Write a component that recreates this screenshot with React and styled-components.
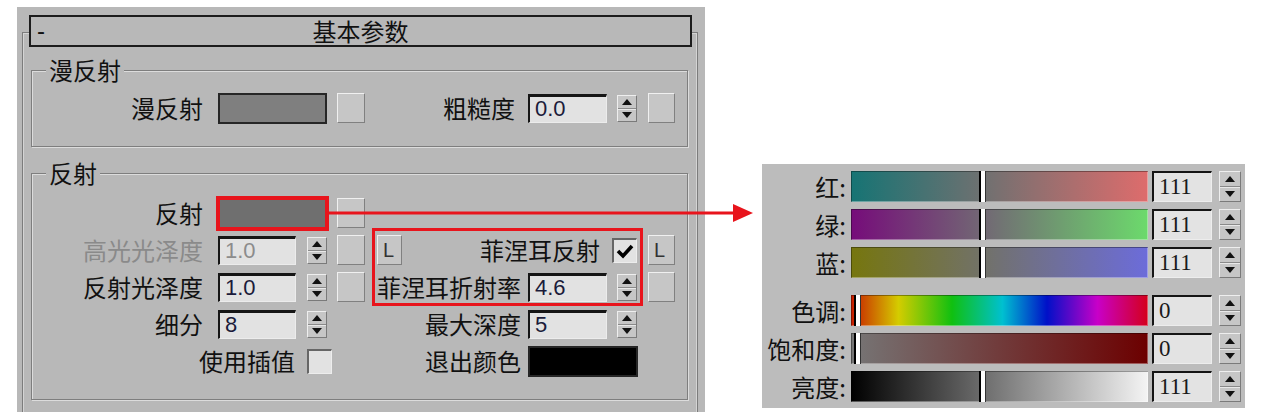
import React from "react";
import styled, { createGlobalStyle } from "styled-components";

const GlobalStyle = createGlobalStyle`
  html, body {
    margin: 0;
    padding: 0;
    background: #ffffff;
  }
  body {
    font-family: "Noto Sans CJK SC", "Noto Sans", sans-serif;
    color: #111;
  }
`;

const Page = styled.div`
  position: relative;
  display: flex;
  align-items: flex-start;
  width: 1267px;
  height: 412px;
  overflow: hidden;
`;

/* ---------- left: material parameter rollout ---------- */

const ParamPanel = styled.div`
  margin: 7px 0 0 17px;
  width: 688px;
  height: 405px;
  background: #b8b8b8;
  overflow: hidden;
`;

const Rollout = styled.div`
  margin: 25px 7px 0 5px;
  height: 400px;
  border: 1px solid #7c7c7c;
  border-bottom: none;
  box-shadow: inset 1px 1px 0 #d4d4d4, inset -1px 0 0 #d4d4d4;
`;

const TitleBar = styled.div`
  display: flex;
  align-items: center;
  box-sizing: border-box;
  height: 32px;
  margin: -18px 5px 0 6px;
  padding: 0 6px;
  border: 2px solid #1c1c1c;
  background: #b8b8b8;
  font-size: 24px;
  line-height: 1;
`;

const Collapse = styled.span`
  width: 14px;
  font-family: "Liberation Sans", sans-serif;
`;

const TitleText = styled.span`
  flex: 1;
  text-align: center;
  padding-right: 14px;
`;

const Group = styled.fieldset`
  margin: ${(p) => p.$top}px 9px 0 8px;
  padding: ${(p) => p.$padTop}px 0 23px;
  min-width: 0;
  border: 1px solid #7e7e7e;
  box-shadow: inset 1px 1px 0 #dcdcdc, 1px 1px 0 #dcdcdc;
`;

const GroupTitle = styled.legend`
  margin-left: 14px;
  padding: 0 3px;
  font-size: 24px;
  line-height: 24px;
  background: #b8b8b8;
`;

const ParamGrid = styled.div`
  position: relative;
  display: grid;
  grid-template-columns: 186px 89px 30px 40px 25px 126px 89px 31px 27px;
  grid-auto-rows: 30px;
  row-gap: 7px;
  align-items: center;
`;

const Label = styled.span`
  grid-column: ${(p) => p.$col};
  justify-self: end;
  padding-right: ${(p) => p.$pad}px;
  white-space: nowrap;
  font-size: 24px;
  line-height: 1;
  color: ${(p) => (p.$dim ? "#8a8a8a" : "#111")};
`;

const Swatch = styled.div`
  grid-column: ${(p) => p.$col};
  box-sizing: border-box;
  width: ${(p) => p.$w}px;
  height: 31px;
  background: ${(p) => p.$color};
  border: 2px solid ${(p) => (p.$mark ? "#e8141c" : "#262626")};
  box-shadow: ${(p) => (p.$mark ? "0 0 0 2px #e8141c" : "none")};
`;

const NumField = styled.div`
  grid-column: ${(p) => p.$col};
  box-sizing: border-box;
  width: ${(p) => p.$w}px;
  height: 29px;
  padding-left: 5px;
  display: flex;
  align-items: center;
  background: #e2e2e2;
  border-style: solid;
  border-width: 3px 1px 1px 2px;
  border-color: #151515 #ececec #ececec #151515;
  font-family: "Liberation Sans", sans-serif;
  font-size: 22px;
  color: ${(p) => (p.$dim ? "#8c8c8c" : "#1b1b3a")};
`;

const SpinBox = styled.div`
  grid-column: ${(p) => p.$col || "auto"};
  box-sizing: border-box;
  width: ${(p) => p.$w}px;
  height: ${(p) => p.$h}px;
  display: flex;
  flex-direction: column;
  background: #c6c6c6;
  border: 1px solid;
  border-color: #eeeeee #7a7a7a #7a7a7a #eeeeee;
`;

const SpinHalf = styled.div`
  flex: 1;
  display: flex;
  align-items: center;
  justify-content: center;
  & + & {
    border-top: 1px solid #8a8a8a;
    box-shadow: inset 0 1px 0 #e8e8e8;
  }
`;

const Arrow = styled.span`
  width: 0;
  height: 0;
  border-left: 5px solid transparent;
  border-right: 5px solid transparent;
  ${(p) => (p.$down ? "border-top: 6px solid #111;" : "border-bottom: 6px solid #111;")}
`;

const MapButton = styled.div`
  grid-column: ${(p) => p.$col};
  box-sizing: border-box;
  width: ${(p) => p.$w || 28}px;
  height: 30px;
  padding-left: 5px;
  display: flex;
  align-items: center;
  background: #c6c6c6;
  border: 1px solid;
  border-color: #f0f0f0 #808080 #808080 #f0f0f0;
  font-family: "Liberation Sans", sans-serif;
  font-size: 20px;
  color: #333;
`;

const CheckBox = styled.div`
  grid-column: ${(p) => p.$col};
  margin-left: ${(p) => p.$shift || 0}px;
  box-sizing: border-box;
  width: 25px;
  height: 25px;
  display: flex;
  align-items: center;
  justify-content: center;
  background: #e2e2e2;
  border-style: solid;
  border-width: 2px 1px 1px 2px;
  border-color: #666666 #ededed #ededed #666666;
`;

const Highlight = styled.div`
  position: absolute;
  left: 340px;
  top: 30px;
  width: 271px;
  height: 78px;
  box-sizing: border-box;
  border: 3px solid #e8141c;
  pointer-events: none;
`;

const Pointer = styled.svg`
  position: absolute;
  left: 327px;
  top: 202px;
`;

function Spinner({ col, w = 20, h = 27 }) {
  return (
    <SpinBox $col={col} $w={w} $h={h}>
      <SpinHalf>
        <Arrow />
      </SpinHalf>
      <SpinHalf>
        <Arrow $down />
      </SpinHalf>
    </SpinBox>
  );
}

function Tick() {
  return (
    <svg width="18" height="16" viewBox="0 0 18 16">
      <path d="M2 8 L7 13 L16 3" fill="none" stroke="#000" strokeWidth="3.6" />
    </svg>
  );
}

/* ---------- right: colour picker sliders ---------- */

const PickerPanel = styled.div`
  margin: 164px 0 0 57px;
  box-sizing: border-box;
  width: 483px;
  height: 244px;
  padding: 7px 4px 0 0;
  display: flex;
  flex-direction: column;
  gap: 17px;
  background: #bcbcbc;
`;

const SliderGroup = styled.div`
  display: grid;
  grid-template-columns: 89px 301px 67px 22px;
  grid-auto-rows: 31px;
  row-gap: 7px;
  align-items: center;
`;

const SliderLabel = styled.span`
  justify-self: end;
  padding-right: 5px;
  white-space: nowrap;
  font-size: 24px;
  line-height: 1;
`;

const Bar = styled.div`
  position: relative;
  width: 297px;
  height: 31px;
  background: ${(p) => p.$fill};
  box-shadow: inset 1px 1px 0 rgba(0, 0, 0, 0.35), inset -1px -1px 0 rgba(255, 255, 255, 0.35);
`;

const Thumb = styled.div`
  position: absolute;
  top: 0;
  bottom: 0;
  width: 4px;
  background: #ffffff;
  border-left: 2px solid #000;
  border-right: 1px solid #333;
`;

const ValueField = styled.div`
  box-sizing: border-box;
  width: 60px;
  height: 31px;
  padding-left: 5px;
  display: flex;
  align-items: center;
  background: #e3e3e3;
  border-style: solid;
  border-width: 2px 1px 1px 2px;
  border-color: #151515 #ededed #ededed #151515;
  font-family: "Liberation Serif", serif;
  font-size: 23px;
  color: #1a1a1a;
`;

const rgbSliders = [
  { label: "红:", value: 111, fill: "linear-gradient(to right, rgb(22,116,116), rgb(222,108,108))" },
  { label: "绿:", value: 111, fill: "linear-gradient(to right, rgb(118,12,122), rgb(108,218,108))" },
  { label: "蓝:", value: 111, fill: "linear-gradient(to right, rgb(118,118,14), rgb(108,108,218))" },
];

const hsvSliders = [
  {
    label: "色调:",
    value: 0,
    fill: "linear-gradient(to right, #c81a00, #d4cc00 16%, #10c010 34%, #00c0d0 51%, #0010c8 66%, #c800c8 83%, #d4001a)",
  },
  { label: "饱和度:", value: 0, fill: "linear-gradient(to right, rgb(118,118,118), rgb(108,0,0))" },
  { label: "亮度:", value: 111, fill: "linear-gradient(to right, #000000, #f4f4f4)" },
];

function SliderRow({ label, value, fill }) {
  const left = 3 + Math.round((value / 255) * 287);
  return (
    <>
      <SliderLabel>{label}</SliderLabel>
      <Bar $fill={fill}>
        <Thumb style={{ left }} />
      </Bar>
      <ValueField>{value}</ValueField>
      <Spinner w={22} h={31} />
    </>
  );
}

export default function App() {
  return (
    <Page>
      <GlobalStyle />
      <ParamPanel>
        <Rollout>
          <TitleBar>
            <Collapse>-</Collapse>
            <TitleText>基本参数</TitleText>
          </TitleBar>

          <Group $top={11} $padTop={11}>
            <GroupTitle>漫反射</GroupTitle>
            <ParamGrid>
              <Label $col="1" $pad={15}>漫反射</Label>
              <Swatch $col="2 / 4" $w={109} $color="#7f7f7f" />
              <MapButton $col="4" />
              <Label $col="5 / 7" $pad={13}>粗糙度</Label>
              <NumField $col="7" $w={79}>0.0</NumField>
              <Spinner col="8" />
              <MapButton $col="9" $w={27} />
            </ParamGrid>
          </Group>

          <Group $top={14} $padTop={13}>
            <GroupTitle>反射</GroupTitle>
            <ParamGrid>
              <Label $col="1" $pad={15}>反射</Label>
              <Swatch $col="2 / 4" $w={109} $color="#6f6f6f" $mark />
              <MapButton $col="4" />

              <Label $col="1" $pad={15} $dim>高光光泽度</Label>
              <NumField $col="2" $w={78} $dim>1.0</NumField>
              <Spinner col="3" />
              <MapButton $col="4" />
              <MapButton $col="5" $w={25}>L</MapButton>
              <Label $col="6 / 8" $pad={17}>菲涅耳反射</Label>
              <CheckBox $col="8" $shift={-5}>
                <Tick />
              </CheckBox>
              <MapButton $col="9" $w={27}>L</MapButton>

              <Label $col="1" $pad={15}>反射光泽度</Label>
              <NumField $col="2" $w={78}>1.0</NumField>
              <Spinner col="3" />
              <MapButton $col="4" />
              <Label $col="5 / 7" $pad={7}>菲涅耳折射率</Label>
              <NumField $col="7" $w={79}>4.6</NumField>
              <Spinner col="8" />
              <MapButton $col="9" $w={27} />

              <Label $col="1" $pad={15}>细分</Label>
              <NumField $col="2" $w={78}>8</NumField>
              <Spinner col="3" />
              <Label $col="5 / 7" $pad={7}>最大深度</Label>
              <NumField $col="7" $w={79}>5</NumField>
              <Spinner col="8" />

              <Label $col="1 / 3" $pad={12}>使用插值</Label>
              <CheckBox $col="3" />
              <Label $col="5 / 7" $pad={7}>退出颜色</Label>
              <Swatch $col="7 / 9" $w={110} $color="#000000" />

              <Highlight />
            </ParamGrid>
          </Group>
        </Rollout>
      </ParamPanel>

      <PickerPanel>
        <SliderGroup>
          {rgbSliders.map((s) => (
            <SliderRow key={s.label} {...s} />
          ))}
        </SliderGroup>
        <SliderGroup>
          {hsvSliders.map((s) => (
            <SliderRow key={s.label} {...s} />
          ))}
        </SliderGroup>
      </PickerPanel>

      <Pointer width="430" height="22" viewBox="0 0 430 22">
        <line x1="0" y1="11" x2="410" y2="11" stroke="#e8141c" strokeWidth="3" />
        <polygon points="406,2 426,11 406,20" fill="#e8141c" />
      </Pointer>
    </Page>
  );
}
